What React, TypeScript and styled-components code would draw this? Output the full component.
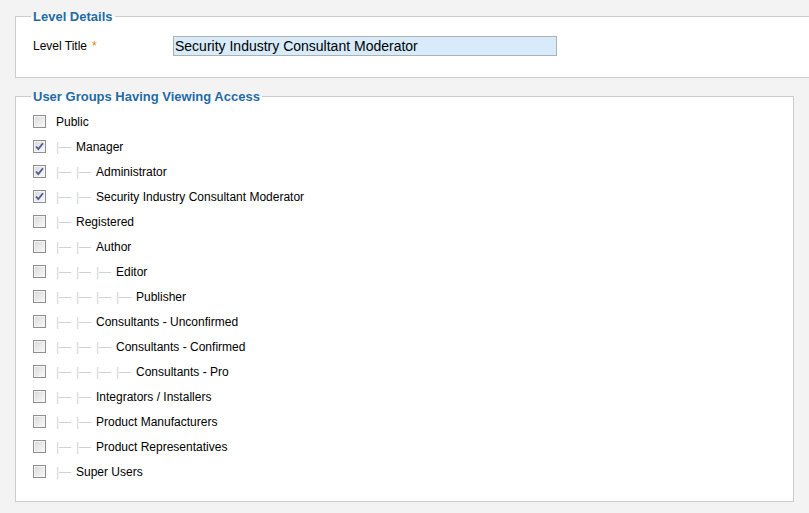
import React from "react";
import styled, { createGlobalStyle } from "styled-components";

const Global = createGlobalStyle`
  html, body { margin: 0; padding: 0; background: #f3f3f3; overflow: hidden; }
  body { font-family: "Liberation Sans", Arial, sans-serif; font-size: 12px; color: #000; }
`;

const Page = styled.div`
  padding: 9px 0 0 15px;
  width: 809px;
  box-sizing: border-box;
`;

const Fieldset = styled.fieldset<{ $wide?: boolean }>`
  margin: 0 0 11px 0;
  padding: 0 17px ${(p) => (p.$wide ? "21px" : "17px")} 17px;
  border: 1px solid #cccccc;
  background: #ffffff;
  width: ${(p) => (p.$wide ? "820px" : "779px")};
  box-sizing: border-box;
`;

const Legend = styled.legend`
  margin-left: -2px;
  padding: 0 2px;
  font-family: "Liberation Sans", Arial, sans-serif;
  font-size: 13px;
  font-weight: bold;
  line-height: 15px;
  color: #1f6aa6;
`;

const FormRow = styled.div`
  display: flex;
  align-items: center;
  margin-top: 12px;
  height: 20px;
`;

const Label = styled.label`
  width: 140px;
  font-size: 12px;
`;

const Star = styled.span`
  color: #eb8207;
  margin-left: 5px;
`;

const Input = styled.div`
  width: 384px;
  height: 20px;
  box-sizing: border-box;
  border: 1px solid #b0b0b0;
  background: #d7ebfb;
  font-size: 14px;
  line-height: 18px;
  padding-left: 1px;
  white-space: nowrap;
`;

const List = styled.div`
  display: flex;
  flex-direction: column;
  padding-top: 5px;
`;

const Row = styled.div`
  display: flex;
  align-items: center;
  height: 25px;
`;

const Box = styled.span<{ $checked?: boolean }>`
  width: 13px;
  height: 13px;
  box-sizing: border-box;
  border: 1px solid #8e8f8f;
  background: linear-gradient(135deg, #d8d8d8 0%, #f0f0f0 70%, #fbfbfb 100%);
  box-shadow: inset 0 0 0 1px #f4f4f4;
  margin-right: 10px;
  display: flex;
  align-items: center;
  justify-content: center;
  flex: none;
`;

const Indent = styled.span`
  display: inline-block;
  width: 20px;
  color: #cfd3d8;
  white-space: nowrap;
  flex: none;
`;

const Name = styled.span`
  white-space: nowrap;
`;

type Group = { name: string; level: number; checked?: boolean };

const groups: Group[] = [
  { name: "Public", level: 0 },
  { name: "Manager", level: 1, checked: true },
  { name: "Administrator", level: 2, checked: true },
  { name: "Security Industry Consultant Moderator", level: 2, checked: true },
  { name: "Registered", level: 1 },
  { name: "Author", level: 2 },
  { name: "Editor", level: 3 },
  { name: "Publisher", level: 4 },
  { name: "Consultants - Unconfirmed", level: 2 },
  { name: "Consultants - Confirmed", level: 3 },
  { name: "Consultants - Pro", level: 4 },
  { name: "Integrators / Installers", level: 2 },
  { name: "Product Manufacturers", level: 2 },
  { name: "Product Representatives", level: 2 },
  { name: "Super Users", level: 1 },
];

const Check = () => (
  <svg width="9" height="9" viewBox="0 0 9 9">
    <path d="M1 4.5 L3.3 7 L8 1.2" fill="none" stroke="#4b5d95" strokeWidth="1.8" />
  </svg>
);

export default function App() {
  return (
    <Page>
      <Global />
      <Fieldset $wide>
        <Legend>Level Details</Legend>
        <FormRow>
          <Label>
            Level Title<Star>*</Star>
          </Label>
          <Input>Security Industry Consultant Moderator</Input>
        </FormRow>
      </Fieldset>
      <Fieldset>
        <Legend>User Groups Having Viewing Access</Legend>
        <List>
          {groups.map((g) => (
            <Row key={g.name}>
              <Box $checked={g.checked}>{g.checked && <Check />}</Box>
              {Array.from({ length: g.level }).map((_, i) => (
                <Indent key={i}>|—</Indent>
              ))}
              <Name>{g.name}</Name>
            </Row>
          ))}
        </List>
      </Fieldset>
    </Page>
  );
}
